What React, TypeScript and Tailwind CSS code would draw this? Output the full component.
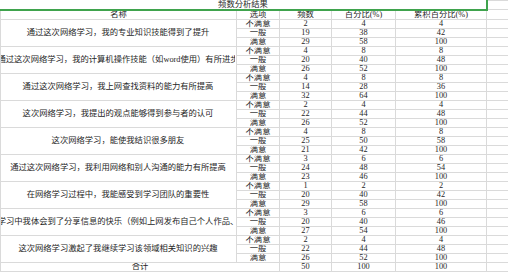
import React from "react";

const options = ["不满意", "一般", "满意"];

const items: { name: string; rows: number[][] }[] = [
  { name: "通过这次网络学习，我的专业知识技能得到了提升", rows: [[2, 4, 4], [19, 38, 42], [29, 58, 100]] },
  { name: "通过这次网络学习，我的计算机操作技能（如word使用）有所进步", rows: [[4, 8, 8], [20, 40, 48], [26, 52, 100]] },
  { name: "通过这次网络学习，我上网查找资料的能力有所提高", rows: [[4, 8, 8], [14, 28, 36], [32, 64, 100]] },
  { name: "这次网络学习，我提出的观点能够得到参与者的认可", rows: [[2, 4, 4], [22, 44, 48], [26, 52, 100]] },
  { name: "这次网络学习，能使我结识很多朋友", rows: [[4, 8, 8], [25, 50, 58], [21, 42, 100]] },
  { name: "通过这次网络学习，我利用网络和别人沟通的能力有所提高", rows: [[3, 6, 6], [24, 48, 54], [23, 46, 100]] },
  { name: "在网络学习过程中，我能感受到学习团队的重要性", rows: [[1, 2, 2], [20, 40, 42], [29, 58, 100]] },
  { name: "在网络学习中我体会到了分享信息的快乐（例如上网发布自己个人作品、看法）", rows: [[3, 6, 6], [20, 40, 46], [27, 54, 100]] },
  { name: "这次网络学习激起了我继续学习该领域相关知识的兴趣", rows: [[2, 4, 4], [22, 44, 48], [26, 52, 100]] },
];

const cell = "border border-[#dadada] h-[9px] p-0 text-center align-middle leading-[8px] whitespace-nowrap overflow-hidden";

export default function App() {
  return (
    <div
      className="w-[508px] h-[272px] overflow-hidden bg-white text-[#262626] text-[8.3px]"
      style={{ fontFamily: '"Liberation Serif", "Noto Sans CJK SC", serif' }}
    >
      <table className="table-fixed border-collapse w-[509px]">
        <colgroup>
          <col className="w-[236px]" />
          <col className="w-[43px]" />
          <col className="w-[52px]" />
          <col className="w-[64px]" />
          <col className="w-[91px]" />
          <col className="w-[23px]" />
        </colgroup>
        <tbody>
          {/* title */}
          <tr>
            <td colSpan={5} className="h-[9px] p-0 border-b-2 border-r-2 border-[#3fa34d] text-center leading-[7px]">
              频数分析结果
            </td>
            <td className={cell}></td>
          </tr>
          <tr>
            <td className={cell}>名称</td>
            <td className={cell}>选项</td>
            <td className={cell}>频数</td>
            <td className={cell}>百分比(%)</td>
            <td className={cell}>累积百分比(%)</td>
            <td className={cell}></td>
          </tr>
          {items.map((item) =>
            item.rows.map((r, i) => (
              <tr key={item.name + i}>
                {i === 0 && (
                  <td rowSpan={3} className="border border-[#dadada] p-0 align-middle overflow-hidden">
                    <div className="w-[234px] flex justify-center overflow-hidden">
                      <span className="shrink-0 whitespace-nowrap leading-[9px]">{item.name}</span>
                    </div>
                  </td>
                )}
                <td className={cell}>{options[i]}</td>
                <td className={cell}>{r[0]}</td>
                <td className={cell}>{r[1]}</td>
                <td className={cell}>{r[2]}</td>
                <td className={cell}></td>
              </tr>
            ))
          )}
          <tr>
            <td colSpan={2} className={cell}>合计</td>
            <td className={cell}>50</td>
            <td className={cell}>100</td>
            <td className={cell}>100</td>
            <td className={cell}></td>
          </tr>
          <tr>
            <td className={cell}></td>
            <td className={cell}></td>
            <td className={cell}></td>
            <td className={cell}></td>
            <td className={cell}></td>
            <td className={cell}></td>
          </tr>
        </tbody>
      </table>
    </div>
  );
}
